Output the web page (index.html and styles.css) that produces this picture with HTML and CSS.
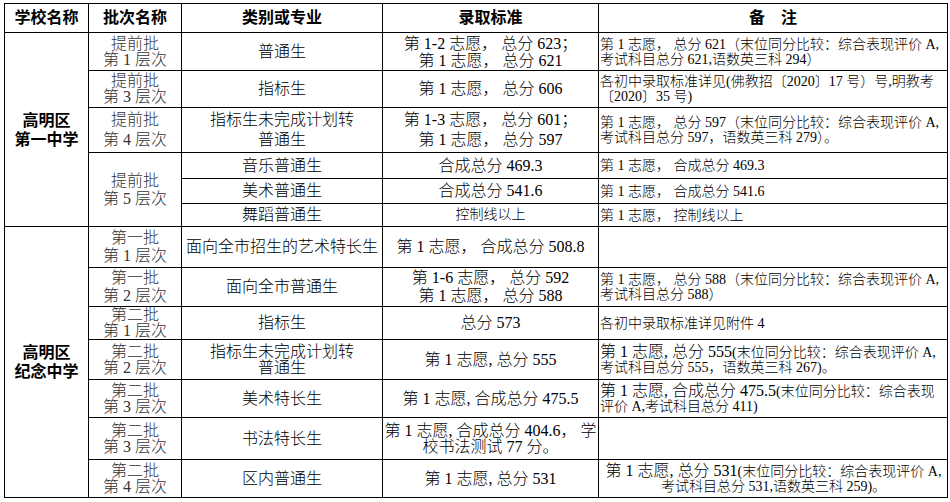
FILE: index.html
```html
<!DOCTYPE html>
<html lang="zh-CN">
<head>
<meta charset="utf-8">
<title>高明区录取标准</title>
<link rel="stylesheet" href="styles.css">
</head>
<body>
<table class="admit">
  <colgroup>
    <col class="c1"><col class="c2"><col class="c3"><col class="c4"><col class="c5">
  </colgroup>
  <thead>
    <tr class="h29">
      <th>学校名称</th><th>批次名称</th><th>类别或专业</th><th>录取标准</th><th>备　注</th>
    </tr>
  </thead>
  <tbody>
    <tr class="h38">
      <td class="school" rowspan="6">高明区<br>第一中学</td>
      <td class="batch">提前批<br>第 1 层次</td>
      <td>普通生</td>
      <td class="lh17">第 1-2 志愿， 总分 623；<br>第 1 志愿， 总分 621</td>
      <td class="note">第 1 志愿， 总分 621（末位同分比较：综合表现评价 A,<br>考试科目总分 621,语数英三科 294）</td>
    </tr>
    <tr class="h37">
      <td class="batch">提前批<br>第 3 层次</td>
      <td>指标生</td>
      <td>第 1 志愿， 总分 606</td>
      <td class="note">各初中录取标准详见(佛教招〔2020〕17 号）号,明教考<br>〔2020〕35 号)</td>
    </tr>
    <tr class="h45 lh20">
      <td class="batch">提前批<br>第 4 层次</td>
      <td>指标生未完成计划转<br>普通生</td>
      <td>第 1-3 志愿， 总分 601；<br>第 1 志愿， 总分 597</td>
      <td class="note">第 1 志愿， 总分 597（末位同分比较：综合表现评价 A,<br>考试科目总分 597，语数英三科 279）。</td>
    </tr>
    <tr class="h26">
      <td class="batch lh18" rowspan="3">提前批<br>第 5 层次</td>
      <td>音乐普通生</td>
      <td>合成总分 469.3</td>
      <td class="note">第 1 志愿， 合成总分 469.3</td>
    </tr>
    <tr class="h25">
      <td>美术普通生</td>
      <td>合成总分 541.6</td>
      <td class="note">第 1 志愿， 合成总分 541.6</td>
    </tr>
    <tr class="h23">
      <td>舞蹈普通生</td>
      <td class="small">控制线以上</td>
      <td class="note">第 1 志愿， 控制线以上</td>
    </tr>
    <tr class="h41 lh18">
      <td class="school" rowspan="8">高明区<br>纪念中学</td>
      <td class="batch">第一批<br>第 1 层次</td>
      <td>面向全市招生的艺术特长生</td>
      <td>第 1 志愿， 合成总分 508.8</td>
      <td class="note"></td>
    </tr>
    <tr class="h39 lh18">
      <td class="batch">第一批<br>第 2 层次</td>
      <td>面向全市普通生</td>
      <td>第 1-6 志愿， 总分 592<br>第 1 志愿， 总分 588</td>
      <td class="note">第 1 志愿， 总分 588（末位同分比较：综合表现评价 A,<br>考试科目总分 588）</td>
    </tr>
    <tr class="h33">
      <td class="batch">第二批<br>第 1 层次</td>
      <td>指标生</td>
      <td>总分 573</td>
      <td class="note">各初中录取标准详见附件 4</td>
    </tr>
    <tr class="h40">
      <td class="batch">第二批<br>第 2 层次</td>
      <td>指标生未完成计划转<br>普通生</td>
      <td>第 1 志愿, 总分 555</td>
      <td class="note"><span class="big">第 1 志愿, 总分 555</span>(末位同分比较：综合表现评价 A,<br>考试科目总分 555，语数英三科 267)。</td>
    </tr>
    <tr class="h38">
      <td class="batch">第二批<br>第 3 层次</td>
      <td>美术特长生</td>
      <td>第 1 志愿, 合成总分 475.5</td>
      <td class="note"><span class="big">第 1 志愿, 合成总分 475.5</span>(末位同分比较：综合表现<br>评价 A,考试科目总分 411)</td>
    </tr>
    <tr class="h42">
      <td class="batch">第二批<br>第 3 层次</td>
      <td>书法特长生</td>
      <td>第 1 志愿, 合成总分 404.6， 学<br>校书法测试 77 分。</td>
      <td class="note"></td>
    </tr>
    <tr class="h38">
      <td class="batch">第二批<br>第 4 层次</td>
      <td>区内普通生</td>
      <td>第 1 志愿, 总分 531</td>
      <td class="note centered"><span class="big">第 1 志愿, 总分 531</span>(末位同分比较：综合表现评价 A,<br>考试科目总分 531,语数英三科 259)。</td>
    </tr>
  </tbody>
</table>
</body>
</html>
```

FILE: styles.css
```css
html, body {
  margin: 0;
  padding: 0;
  background: #ffffff;
}

body {
  font-family: "Liberation Serif", "Noto Sans CJK SC", serif;
  color: #000000;
}

.admit {
  border-collapse: collapse;
  table-layout: fixed;
  width: 943px;
  margin: 3px 0 0 4px;
}

.c1 { width: 84px; }
.c2 { width: 93px; }
.c3 { width: 201px; }
.c4 { width: 216px; }
.c5 { width: 349px; }

.admit th,
.admit td {
  border: 1px solid #000000;
  padding: 0 1px;
  text-align: center;
  vertical-align: middle;
  font-size: 16px;
  line-height: 16px;
  font-weight: 300;
  white-space: nowrap;
  overflow: hidden;
}

.admit th {
  font-family: "Liberation Sans", "Noto Sans CJK SC", sans-serif;
  font-weight: 700;
}

.admit td.school {
  font-family: "Liberation Sans", "Noto Sans CJK SC", sans-serif;
  font-weight: 700;
  line-height: 19px;
}

.admit td.batch {
  color: #333333;
}

.admit td.small {
  font-size: 14px;
}

.admit td.note {
  text-align: left;
  font-size: 14px;
  line-height: 15px;
  padding: 0 0 0 1px;
}

.admit td.note.centered {
  text-align: center;
}

.note .big {
  font-size: 16px;
}

.h29 { height: 29px; }
.h38 { height: 38px; }
.h37 { height: 37px; }
.h45 { height: 45px; }
.h26 { height: 26px; }
.h25 { height: 25px; }
.h23 { height: 23px; }
.h41 { height: 41px; }
.h39 { height: 39px; }
.h33 { height: 33px; }
.h40 { height: 40px; }
.h42 { height: 42px; }

.admit .lh17 { line-height: 17px; }
.admit tr.lh18 > td:not(.school):not(.note),
.admit td.lh18 { line-height: 18px; }
.admit tr.lh20 > td:not(.note) { line-height: 20px; }
```
